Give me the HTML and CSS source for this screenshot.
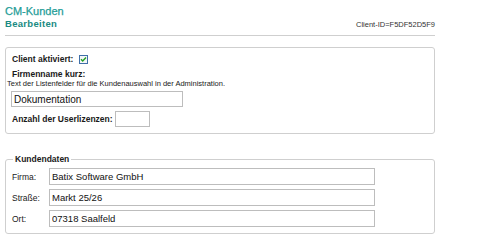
FILE: index.html
```html
<!DOCTYPE html>
<html lang="de">

<head>
    <meta charset="UTF-8">
    <title>CM-Kunden - Bearbeiten</title>
    <link rel="stylesheet" href="styles.css">
</head>

<body>
    <div class="page">
        <!-- Kopf -->
        <div class="header">
            <div>
                <h1>CM-Kunden</h1>
                <h2>Bearbeiten</h2>
            </div>
            <div class="client-id">Client-ID=F5DF52D5F9</div>
        </div>

        <!-- Client -->
        <div class="box">
            <div class="row-check">
                <span class="label-b">Client aktiviert:</span>
                <span class="check">
                    <svg width="9" height="9" viewBox="0 0 9 9">
                        <rect x="0.5" y="0.5" width="8" height="8" fill="#f4f6f8" stroke="#3f6fa8"/>
                        <path d="M2 4.3 L3.7 6 L7 2.6" fill="none" stroke="#21a121" stroke-width="1.4"/>
                    </svg>
                </span>
            </div>
            <div class="label-b firmenname">Firmenname kurz:</div>
            <div class="hint">Text der Listenfelder für die Kundenauswahl in der Administration.</div>
            <input class="field field-short" type="text" value="Dokumentation">
            <div class="row-lizenz">
                <span class="label-b">Anzahl der Userlizenzen:</span>
                <input class="field field-tiny" type="text" value="">
            </div>
        </div>

        <!-- Kundendaten -->
        <fieldset class="kunden">
            <legend>Kundendaten</legend>
            <div class="grid">
                <label>Firma:</label>
                <input class="field" type="text" value="Batix Software GmbH">
                <label>Straße:</label>
                <input class="field" type="text" value="Markt 25/26">
                <label>Ort:</label>
                <input class="field" type="text" value="07318 Saalfeld">
            </div>
        </fieldset>
    </div>
</body>

</html>
```

FILE: styles.css
```css
/* Allgemein */
* {
    margin: 0;
    padding: 0;
    box-sizing: border-box;
}

body {
    font-family: "Liberation Sans", Arial, sans-serif;
    font-size: 8.5px;
    color: #1a1a1a;
    background: #ffffff;
}

.page {
    width: 435px;
    padding: 5px 0 0 5px;
}

/* Kopf */
.header {
    display: flex;
    justify-content: space-between;
    align-items: flex-end;
    padding-bottom: 5px;
    border-bottom: 1px solid #cfcfcf;
}

.header h1 {
    font-size: 11px;
    line-height: 12px;
    font-weight: normal;
    color: #1f9d98;
    -webkit-text-stroke: 0.25px #1f9d98;
}

.header h2 {
    margin-top: 1px;
    font-size: 9.5px;
    line-height: 12px;
    font-weight: bold;
    letter-spacing: 0.3px;
    color: #198a82;
}

.client-id {
    margin-bottom: 1px;
    font-size: 7.5px;
    line-height: 9px;
    color: #333;
}

/* Box oben */
.box {
    margin-top: 11px;
    border: 1px solid #cfcfcf;
    border-radius: 3px;
    padding: 5px 6px 6px 6px;
}

.label-b {
    font-weight: bold;
}

.row-check {
    display: flex;
    align-items: center;
    gap: 6px;
    line-height: 12px;
}

.check svg {
    display: block;
}

.firmenname {
    margin-top: 4px;
    line-height: 10px;
}

.hint {
    margin-left: -5px;
    font-size: 7.5px;
    line-height: 9px;
}

.field {
    display: block;
    height: 16px;
    border: 1px solid #bdbdbd;
    padding: 0 2px;
    font-family: "Liberation Sans", Arial, sans-serif;
    font-size: 9.5px;
    color: #111;
    background: #fff;
    outline: none;
}

.field-short {
    width: 172px;
    margin: 3px 0 0 -1px;
    font-size: 10px;
}

.row-lizenz {
    display: flex;
    align-items: center;
    gap: 2px;
    margin-top: 4px;
}

.field-tiny {
    width: 35px;
}

/* Kundendaten */
.kunden {
    margin-top: 20px;
    border: 1px solid #cfcfcf;
    border-radius: 3px;
    padding: 0 6px 6px 6px;
}

.kunden legend {
    margin-left: 1px;
    padding: 0 2px;
    font-weight: bold;
    line-height: 10px;
}

.grid {
    display: grid;
    grid-template-columns: 37px 326px;
    row-gap: 4px;
    align-items: center;
    margin-top: 4px;
}

.grid .field {
    height: 17px;
}
```
